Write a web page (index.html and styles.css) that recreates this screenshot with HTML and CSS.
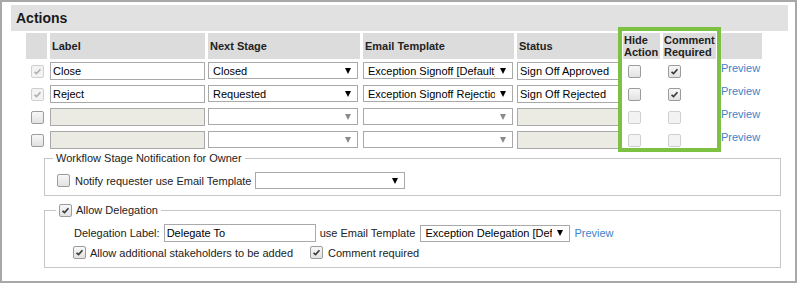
FILE: index.html
```html
<!DOCTYPE html>
<html lang="en">

<head>
    <meta charset="UTF-8">
    <meta name="viewport" content="width=device-width, initial-scale=1.0">
    <title>Actions</title>
    <link rel="stylesheet" href="styles.css">
</head>

<body>

    <div class="panel">
        <div class="title">Actions</div>

        <table class="actions">
            <colgroup>
                <col class="c-check">
                <col class="c-label">
                <col class="c-stage">
                <col class="c-email">
                <col class="c-status">
                <col class="c-hide">
                <col class="c-comment">
                <col class="c-preview">
            </colgroup>
            <tr>
                <th></th>
                <th>Label</th>
                <th>Next Stage</th>
                <th>Email Template</th>
                <th>Status</th>
                <th class="two-line">Hide<br>Action</th>
                <th class="two-line">Comment<br>Required</th>
                <th></th>
            </tr>
            <tr>
                <td><span class="cb dim checked"><svg viewBox="0 0 13 13"><path d="M3 6.8 L5.4 9 L10 3.8"/></svg></span></td>
                <td><div class="field">Close</div></td>
                <td><div class="select"><span class="val">Closed</span><span class="arrow"></span></div></td>
                <td><div class="select"><span class="val">Exception Signoff [Default]</span><span class="arrow"></span></div></td>
                <td><div class="field">Sign Off Approved</div></td>
                <td><span class="cb"></span></td>
                <td><span class="cb checked"><svg viewBox="0 0 13 13"><path d="M3 6.8 L5.4 9 L10 3.8"/></svg></span></td>
                <td><a class="link" href="#">Preview</a></td>
            </tr>
            <tr>
                <td><span class="cb dim checked"><svg viewBox="0 0 13 13"><path d="M3 6.8 L5.4 9 L10 3.8"/></svg></span></td>
                <td><div class="field">Reject</div></td>
                <td><div class="select"><span class="val">Requested</span><span class="arrow"></span></div></td>
                <td><div class="select"><span class="val">Exception Signoff Rejection</span><span class="arrow"></span></div></td>
                <td><div class="field">Sign Off Rejected</div></td>
                <td><span class="cb"></span></td>
                <td><span class="cb checked"><svg viewBox="0 0 13 13"><path d="M3 6.8 L5.4 9 L10 3.8"/></svg></span></td>
                <td><a class="link" href="#">Preview</a></td>
            </tr>
            <tr>
                <td><span class="cb"></span></td>
                <td><div class="field off"></div></td>
                <td><div class="select"><span class="val"></span><span class="arrow grey"></span></div></td>
                <td><div class="select"><span class="val"></span><span class="arrow grey"></span></div></td>
                <td><div class="field off"></div></td>
                <td><span class="cb dim"></span></td>
                <td><span class="cb dim"></span></td>
                <td><a class="link" href="#">Preview</a></td>
            </tr>
            <tr>
                <td><span class="cb"></span></td>
                <td><div class="field off"></div></td>
                <td><div class="select"><span class="val"></span><span class="arrow grey"></span></div></td>
                <td><div class="select"><span class="val"></span><span class="arrow grey"></span></div></td>
                <td><div class="field off"></div></td>
                <td><span class="cb dim"></span></td>
                <td><span class="cb dim"></span></td>
                <td><a class="link" href="#">Preview</a></td>
            </tr>
        </table>

        <div class="highlight"></div>

        <fieldset class="box notify">
            <legend>Workflow Stage Notification for Owner</legend>
            <div class="line notify-line">
                <span class="cb"></span>
                <span>Notify requester use Email Template</span>
                <div class="select wide"><span class="val"></span><span class="arrow"></span></div>
            </div>
        </fieldset>

        <fieldset class="box deleg">
            <legend><span class="cb checked"><svg viewBox="0 0 13 13"><path d="M3 6.8 L5.4 9 L10 3.8"/></svg></span>Allow Delegation</legend>
            <div class="line deleg-line">
                <span>Delegation Label:</span>
                <div class="field deleg-input">Delegate To</div>
                <span>use Email Template</span>
                <div class="select wide"><span class="val">Exception Delegation [Default]</span><span class="arrow"></span></div>
                <a class="link" href="#">Preview</a>
            </div>
            <div class="line opts-line">
                <span class="cb checked"><svg viewBox="0 0 13 13"><path d="M3 6.8 L5.4 9 L10 3.8"/></svg></span>
                <span class="opt">Allow additional stakeholders to be added</span>
                <span class="cb checked"><svg viewBox="0 0 13 13"><path d="M3 6.8 L5.4 9 L10 3.8"/></svg></span>
                <span>Comment required</span>
            </div>
        </fieldset>
    </div>

</body>

</html>
```

FILE: styles.css
```css
body {
    margin: 0;
    background-color: #fff;
    font-family: "Liberation Sans", Arial, sans-serif;
    font-size: 11px;
    color: #222;
}

.panel {
    position: relative;
    height: 283px;
    box-sizing: border-box;
    border: 2px solid #a8a8a8;
    padding-top: 3px;
}

.title {
    margin: 0 7px 0 9px;
    height: 26px;
    line-height: 26px;
    padding-left: 5px;
    background-color: #e1e1e1;
    font-size: 14px;
    font-weight: bold;
    color: #1a1a1a;
}

/* table of actions */

.actions {
    table-layout: fixed;
    border-collapse: separate;
    border-spacing: 3px 0;
    margin: 2px 0 0 21px;
}

.c-check { width: 21px; }
.c-label { width: 155px; }
.c-stage { width: 152px; }
.c-email { width: 151px; }
.c-status { width: 103px; }
.c-hide { width: 37px; }
.c-comment { width: 53px; }
.c-preview { width: 43px; }

.actions th {
    height: 26px;
    padding: 0 2px;
    background-color: #dcdcdc;
    text-align: left;
    font-weight: bold;
    line-height: 12px;
    color: #222;
}

.actions th.two-line {
    padding-left: 1px;
    padding-right: 0;
}

.actions td {
    height: 23px;
    padding: 3px 0 0 0;
    box-sizing: border-box;
    vertical-align: top;
    white-space: nowrap;
}

.actions td .link {
    display: inline-block;
    margin: -1px 0 0 2px;
}

.actions td .cb {
    margin: 3px 0 0 5px;
}

/* form controls */

.field {
    height: 18px;
    box-sizing: border-box;
    border: 1px solid #a9a9a9;
    padding: 0 2px;
    line-height: 16px;
    background-color: #fff;
    color: #000;
    white-space: nowrap;
    overflow: hidden;
}

.field.off {
    background-color: #ebebe4;
}

.select {
    display: flex;
    align-items: center;
    width: 150px;
    height: 17px;
    box-sizing: border-box;
    border: 1px solid #a9a9a9;
    background-color: #fff;
    color: #000;
}

.select .val {
    flex: 1;
    padding-left: 4px;
    white-space: nowrap;
    overflow: hidden;
}

.arrow {
    flex: none;
    width: 0;
    height: 0;
    margin: 0 6px 0 5px;
    border-left: 3px solid transparent;
    border-right: 3px solid transparent;
    border-top: 6px solid #000;
}

.arrow.grey {
    border-top-color: #8a8a8a;
}

.cb {
    display: inline-block;
    width: 13px;
    height: 13px;
    box-sizing: border-box;
    border: 1px solid #9c9c9c;
    border-radius: 2px;
    background: linear-gradient(#f7f7f7, #e2e2e2);
    vertical-align: top;
}

.cb svg {
    display: block;
    width: 11px;
    height: 11px;
    fill: none;
    stroke: #3c3c3c;
    stroke-width: 2;
}

.cb.dim {
    border-color: #cfcfcf;
    background: #f3f3f3;
}

.cb.dim svg {
    stroke: #b0b0b0;
}

.link {
    color: #3d83c8;
    text-decoration: none;
}

.highlight {
    position: absolute;
    left: 616px;
    top: 25px;
    width: 103px;
    height: 125px;
    box-sizing: border-box;
    border: 4px solid #7cc142;
}

/* fieldsets under the table */

.box {
    margin: 1px 14px 0 42px;
    padding: 0 0 0 8px;
    border: 1px solid #c6c6c6;
}

.box legend {
    padding: 0 3px;
    line-height: 13px;
}

.line {
    display: flex;
    align-items: center;
}

.notify {
    padding-bottom: 6px;
}

.notify-line {
    margin-top: 7px;
    padding-left: 4px;
    gap: 5px;
}

.notify-line .select {
    margin-left: -2px;
}

.deleg {
    margin-top: 8px;
    padding-bottom: 8px;
}

.deleg legend {
    margin-left: 3px;
    display: flex;
    align-items: center;
}

.deleg legend .cb {
    margin-right: 4px;
}

.deleg-line {
    margin-top: 7px;
    padding-left: 21px;
    gap: 4px;
}

.deleg-input {
    width: 152px;
}

.deleg-line .select {
    margin-left: 1px;
}

.opts-line {
    margin-top: 4px;
    padding-left: 20px;
}

.opts-line .opt {
    margin: 0 17px 0 4px;
}

.opts-line .cb + span:last-child {
    margin-left: 5px;
}
```
